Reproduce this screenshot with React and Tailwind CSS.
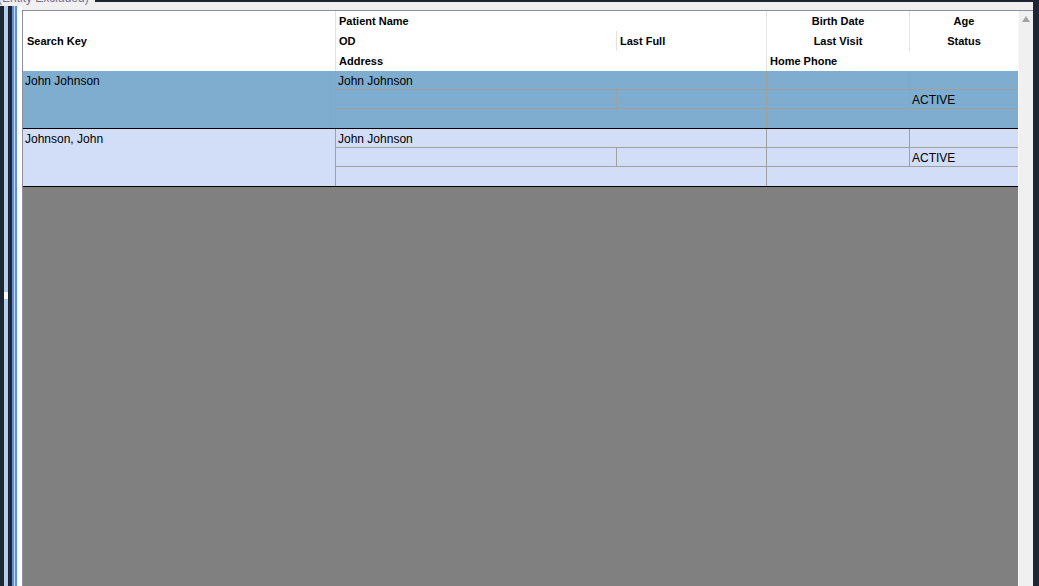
import React from "react";

const font = { fontFamily: '"Liberation Sans", Arial, sans-serif' };

function HeaderRow() {
  return (
    <div className="flex h-[60px] bg-white text-[11px] font-bold text-black shrink-0">
      <div className="w-[313px] border-r border-[#e3e3e3] flex items-center pl-[4px]">Search Key</div>
      <div className="w-[431px] border-r border-[#e3e3e3] flex flex-col">
        <div className="h-[20px] flex items-center pl-[3px]">Patient Name</div>
        <div className="h-[20px] flex">
          <div className="w-[281px] border-r border-[#e3e3e3] flex items-center pl-[3px]">OD</div>
          <div className="flex-1 flex items-center pl-[3px]">Last Full</div>
        </div>
        <div className="h-[20px] flex items-center pl-[3px]">Address</div>
      </div>
      <div className="flex-1 flex flex-col">
        <div className="h-[40px] flex">
          <div className="w-[143px] border-r border-[#e3e3e3] flex flex-col">
            <div className="h-[20px] flex items-center justify-center">Birth Date</div>
            <div className="h-[20px] flex items-center justify-center">Last Visit</div>
          </div>
          <div className="flex-1 flex flex-col">
            <div className="h-[20px] flex items-center justify-center">Age</div>
            <div className="h-[20px] flex items-center justify-center">Status</div>
          </div>
        </div>
        <div className="h-[20px] flex items-center pl-[3px]">Home Phone</div>
      </div>
    </div>
  );
}

function DataRow({ bg, searchKey, name, status }) {
  return (
    <div className={`flex h-[58px] border-b border-black text-[12px] text-black shrink-0 ${bg}`}>
      <div className="w-[313px] border-r border-[#a0a0a0] pl-[2px] pt-[3px] leading-[14px]">{searchKey}</div>
      <div className="flex-1 flex flex-col">
        <div className="h-[19px] flex border-b border-[#a0a0a0]">
          <div className="w-[431px] border-r border-[#a0a0a0] pl-[2px] pt-[3px] leading-[14px]">{name}</div>
          <div className="w-[143px] border-r border-[#a0a0a0]"></div>
          <div className="flex-1"></div>
        </div>
        <div className="h-[19px] flex border-b border-[#a0a0a0]">
          <div className="w-[281px] border-r border-[#a0a0a0]"></div>
          <div className="w-[150px] border-r border-[#a0a0a0]"></div>
          <div className="w-[143px] border-r border-[#a0a0a0]"></div>
          <div className="flex-1 pl-[2px] pt-[3px] leading-[14px]">{status}</div>
        </div>
        <div className="flex-1 flex">
          <div className="w-[431px] border-r border-[#a0a0a0]"></div>
          <div className="flex-1"></div>
        </div>
      </div>
    </div>
  );
}

export default function App() {
  return (
    <div className="relative w-[1039px] h-[586px] bg-[#1e2533] overflow-hidden flex" style={font}>
      {/* left strips */}
      <div className="w-[22px] h-full flex flex-col shrink-0">
        <div className="h-[6px] bg-[#f0f0f0] shrink-0"></div>
        <div className="flex-1 flex">
          <div className="w-[4px] bg-[#1e2533]"></div>
          <div className="w-[4px] flex flex-col">
            <div className="h-[286px] bg-[#b4cdee]"></div>
            <div className="h-[7px] bg-white"></div>
            <div className="flex-1 bg-[#b4cdee]"></div>
          </div>
          <div className="w-[4px] bg-[#1e2533]"></div>
          <div className="w-[2px] bg-[#5a8fe0]"></div>
          <div className="w-[1px] bg-[#c8daf5]"></div>
          <div className="w-[2px] bg-[#5a8fe0]"></div>
          <div className="w-[5px] bg-white"></div>
        </div>
      </div>

      {/* main column */}
      <div className="flex-1 h-full flex flex-col">
        <div className="h-[10px] flex shrink-0">
          <div className="w-[73px] bg-[#f0f0f0]"></div>
          <div className="flex-1 flex flex-col">
            <div className="h-[2px] bg-[#1e2533]"></div>
            <div className="flex-1 bg-[#f0f0f0]"></div>
          </div>
          <div className="w-[6px] bg-[#1e2533]"></div>
        </div>
        <div className="flex-1 flex min-h-0">
          <div className="flex-1 flex border-t border-l border-[#8e8e9e] min-h-0">
            <div className="w-[995px] flex flex-col">
              <HeaderRow />
              <DataRow bg="bg-[#7fadd0]" searchKey="John Johnson" name="John Johnson" status="ACTIVE" />
              <DataRow bg="bg-[#d2ddf7]" searchKey="Johnson, John" name="John Johnson" status="ACTIVE" />
              <div className="flex-1 bg-[#808080]"></div>
            </div>
            <div className="w-[1px] bg-[#f8f8f8]"></div>
            <div className="flex-1 bg-[#f0f0f0] flex justify-center pt-[5px]">
              <div className="w-0 h-0 border-l-[4px] border-r-[4px] border-b-[6px] border-l-transparent border-r-transparent border-b-[#a3a3a3]"></div>
            </div>
          </div>
          <div className="w-[6px] bg-[#1e2533] shrink-0"></div>
        </div>
      </div>

      {/* cut-off label at top */}
      <div className="absolute left-[-2px] top-[-9px] text-[12px] leading-[14px] text-[#7b6d8d] whitespace-nowrap">
        (Entity Excluded)
      </div>
    </div>
  );
}
